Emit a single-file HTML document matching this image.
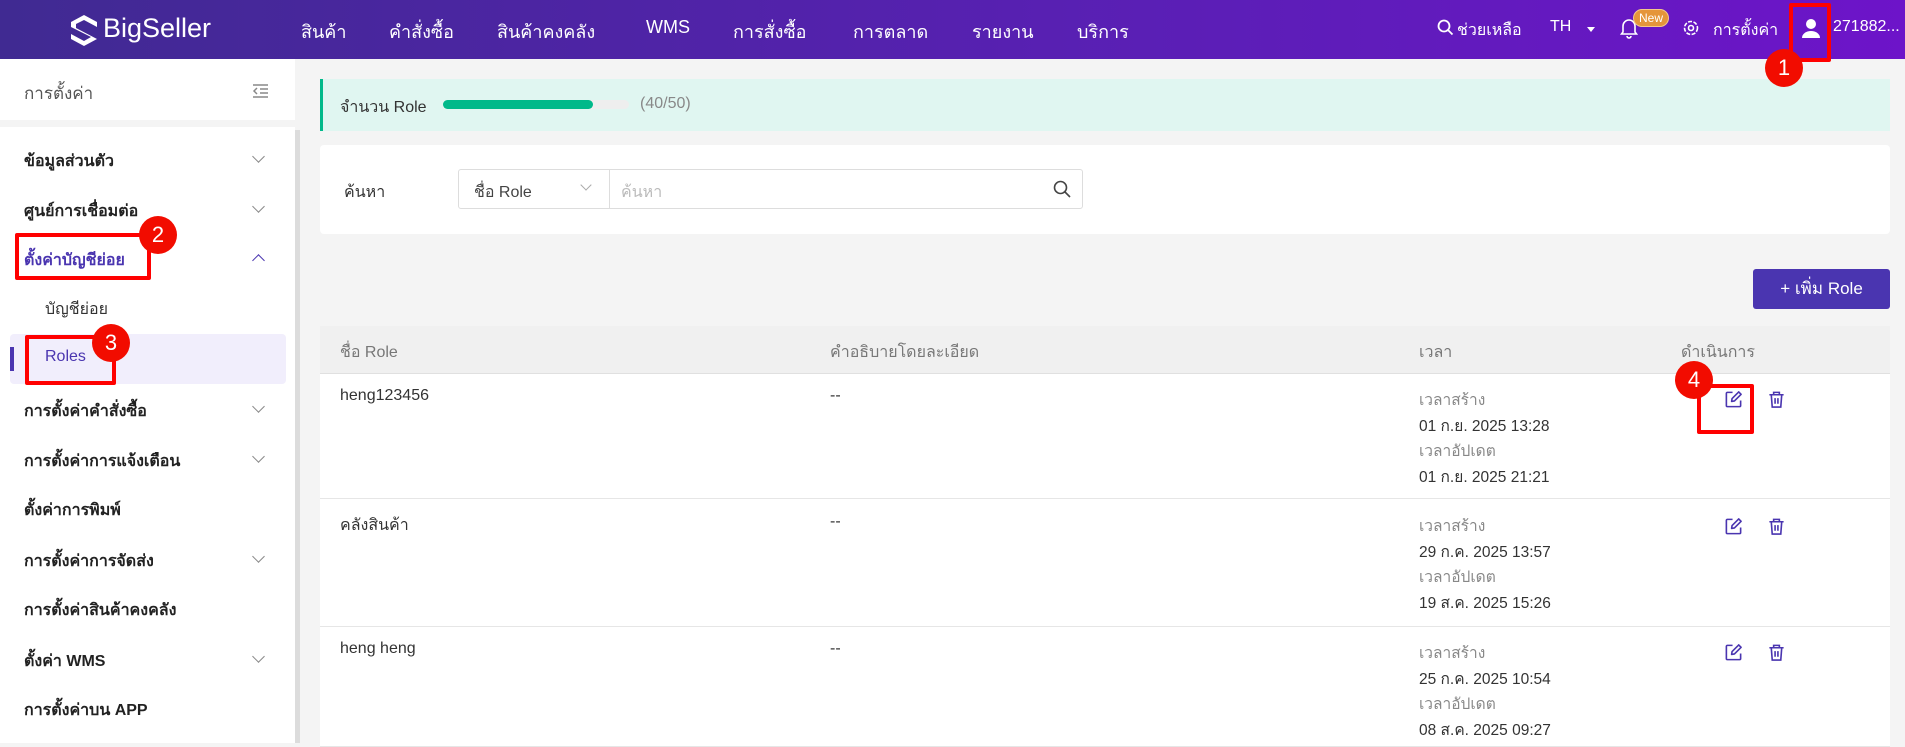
<!DOCTYPE html>
<html><head><meta charset="utf-8"><style>
*{box-sizing:border-box;margin:0;padding:0}
body{width:1905px;height:743px;overflow:hidden;background:#f4f4f4;font-family:"Liberation Sans","Noto Sans CJK SC",sans-serif;color:#333;position:relative}
.a{position:absolute;white-space:nowrap}
.hdr{position:absolute;left:0;top:0;width:1905px;height:59px;background:linear-gradient(90deg,#402a92,#5a1fb5 60%,#6d14c9)}
.nav{color:#fff;font-size:18px;top:17px}
.side{position:absolute;left:0;top:59px;width:295px;height:684px;background:#fff}
.mi{font-size:16px;font-weight:bold;color:#222;left:24px}
.chev{left:254px;width:9px;height:9px;border-right:1.5px solid #888;border-bottom:1.5px solid #888;transform:rotate(45deg)}
.red{position:absolute;border:4px solid #f00;border-radius:2px}
.circ{position:absolute;width:38px;height:38px;border-radius:50%;background:#f20c00;color:#fff;font-size:22px;text-align:center;line-height:38px}
.tl{font-size:15.5px;color:#888;left:1419px}
.tv{font-size:15.5px;color:#333;left:1419px}
.row{position:absolute;left:320px;width:1570px;background:#fff;border-bottom:1px solid #e6e6e6}
</style></head><body>
<div class="hdr"></div>
<svg class="a" style="left:68px;top:13px" width="32" height="34" viewBox="0 0 32 34"><path d="M16 2 L29 9 L29 14 L16 7 L8 11 L8 15 L29 26 L16 33 L3 26 L3 21 L16 28 L23 24 L3 14 L3 9 Z" fill="#fff"/></svg>
<div class="a" style="left:103px;top:13px;color:#fff;font-size:27px">BigSeller</div>
<div class="a nav" style="left:301px">สินค้า</div>
<div class="a nav" style="left:389px">คำสั่งซื้อ</div>
<div class="a nav" style="left:497px">สินค้าคงคลัง</div>
<div class="a nav" style="left:646px">WMS</div>
<div class="a nav" style="left:733px">การสั่งซื้อ</div>
<div class="a nav" style="left:853px">การตลาด</div>
<div class="a nav" style="left:972px">รายงาน</div>
<div class="a nav" style="left:1077px">บริการ</div>
<svg class="a" style="left:1437px;top:19px" width="17" height="17" viewBox="0 0 17 17"><circle cx="7" cy="7" r="5.5" stroke="#fff" stroke-width="1.8" fill="none"/><path d="M11 11 L15.5 15.5" stroke="#fff" stroke-width="1.8"/></svg>
<div class="a" style="left:1457px;top:18px;color:#fff;font-size:16px">ช่วยเหลือ</div>
<div class="a" style="left:1550px;top:18px;color:#fff;font-size:16px">TH</div>
<div class="a" style="left:1587px;top:27px;border-left:4px solid transparent;border-right:4px solid transparent;border-top:5px solid #fff"></div>
<svg class="a" style="left:1620px;top:17px" width="18" height="22" viewBox="0 0 18 22"><path d="M3 15 V9 a6 6 0 0 1 12 0 V15 L16.5 17 H1.5 Z M7 19 a2 2 0 0 0 4 0" stroke="#fff" stroke-width="1.6" fill="none"/></svg>
<div class="a" style="left:1633px;top:9px;background:#e5953a;color:#fff;font-size:12px;border-radius:9px;padding:1px 5px;border:1px solid #f5c88a">New</div>
<svg class="a" style="left:1682px;top:19px" width="18" height="18" viewBox="0 0 18 18"><circle cx="9" cy="9" r="6.5" stroke="#fff" stroke-width="1.6" fill="none" stroke-dasharray="4 1.5"/><circle cx="9" cy="9" r="2.5" stroke="#fff" stroke-width="1.6" fill="none"/></svg>
<div class="a" style="left:1713px;top:18px;color:#fff;font-size:16px">การตั้งค่า</div>
<svg class="a" style="left:1800px;top:17px" width="22" height="22" viewBox="0 0 22 22"><circle cx="11" cy="7" r="5" fill="#fff"/><path d="M2 21 a9 7 0 0 1 18 0 Z" fill="#fff"/></svg>
<div class="a" style="left:1833px;top:18px;color:#fff;font-size:16px">271882...</div>

<div class="side"></div>
<div class="a" style="left:0;top:120px;width:295px;height:7px;background:#f4f4f4"></div>
<div class="a" style="left:295px;top:130px;width:5px;height:613px;background:#dcdcdc"></div>
<div class="a" style="left:24px;top:80px;font-size:17px;color:#555">การตั้งค่า</div>
<svg class="a" style="left:252px;top:84px" width="17" height="14" viewBox="0 0 17 14"><path d="M1 1H16M8 5H16M8 9H16M1 13H16M5 4 L2 7 L5 10" stroke="#888" stroke-width="1.5" fill="none"/></svg>
<div class="a mi" style="top:149px">ข้อมูลส่วนตัว</div><div class="a chev" style="top:152px"></div>
<div class="a mi" style="top:199px">ศูนย์การเชื่อมต่อ</div><div class="a chev" style="top:202px"></div>
<div class="a mi" style="top:248px;color:#4a35b0">ตั้งค่าบัญชีย่อย</div><div class="a chev" style="top:256px;transform:rotate(225deg);border-color:#4a35b0"></div>
<div class="a" style="left:45px;top:297px;font-size:16px;color:#333">บัญชีย่อย</div>
<div class="a" style="left:10px;top:334px;width:276px;height:50px;background:#f1eefc;border-radius:4px"></div>
<div class="a" style="left:10px;top:347px;width:4px;height:24px;background:#4a35b0"></div>
<div class="a" style="left:45px;top:348px;font-size:16px;color:#4a35b0">Roles</div>
<div class="a mi" style="top:399px">การตั้งค่าคำสั่งซื้อ</div><div class="a chev" style="top:402px"></div>
<div class="a mi" style="top:449px">การตั้งค่าการแจ้งเตือน</div><div class="a chev" style="top:452px"></div>
<div class="a mi" style="top:498px">ตั้งค่าการพิมพ์</div>
<div class="a mi" style="top:549px">การตั้งค่าการจัดส่ง</div><div class="a chev" style="top:552px"></div>
<div class="a mi" style="top:598px">การตั้งค่าสินค้าคงคลัง</div>
<div class="a mi" style="top:649px">ตั้งค่า WMS</div><div class="a chev" style="top:652px"></div>
<div class="a mi" style="top:698px">การตั้งค่าบน APP</div>

<div class="a" style="left:320px;top:79px;width:1570px;height:52px;background:#e0f6f1;border-left:3px solid #00b98a"></div>
<div class="a" style="left:340px;top:95px;font-size:16px;color:#333">จำนวน Role</div>
<div class="a" style="left:443px;top:100px;width:186px;height:9px;background:#eee;border-radius:5px"></div>
<div class="a" style="left:443px;top:100px;width:150px;height:9px;background:#00b98a;border-radius:5px"></div>
<div class="a" style="left:640px;top:95px;font-size:16px;color:#888">(40/50)</div>

<div class="a" style="left:320px;top:145px;width:1570px;height:89px;background:#fff;border-radius:4px"></div>
<div class="a" style="left:344px;top:180px;font-size:16px">ค้นหา</div>
<div class="a" style="left:458px;top:169px;width:625px;height:40px;border:1px solid #ddd;border-radius:3px"></div>
<div class="a" style="left:609px;top:169px;width:1px;height:40px;background:#ddd"></div>
<div class="a" style="left:474px;top:180px;font-size:16px;color:#444">ชื่อ Role</div>
<div class="a" style="left:582px;top:181px;width:8px;height:8px;border-right:1px solid #aaa;border-bottom:1px solid #aaa;transform:rotate(45deg)"></div>
<div class="a" style="left:621px;top:180px;font-size:16px;color:#bbb">ค้นหา</div>
<svg class="a" style="left:1053px;top:180px" width="18" height="18" viewBox="0 0 18 18"><circle cx="7.5" cy="7.5" r="6" stroke="#444" stroke-width="1.6" fill="none"/><path d="M12 12 L17 17" stroke="#444" stroke-width="1.6"/></svg>

<div class="a" style="left:1753px;top:269px;width:137px;height:40px;background:#4a35b0;border-radius:3px;color:#fff;font-size:17px;text-align:center;line-height:40px">+ เพิ่ม Role</div>

<div class="a" style="left:320px;top:326px;width:1570px;height:48px;background:#f0f0f0;border-bottom:1px solid #e0e0e0"></div>
<div class="a" style="left:340px;top:340px;font-size:16px;color:#777">ชื่อ Role</div>
<div class="a" style="left:830px;top:340px;font-size:16px;color:#777">คำอธิบายโดยละเอียด</div>
<div class="a" style="left:1419px;top:340px;font-size:16px;color:#777">เวลา</div>
<div class="a" style="left:1681px;top:340px;font-size:16px;color:#777">ดำเนินการ</div>

<div class="row" style="top:374px;height:125px"></div>
<div class="row" style="top:499px;height:128px"></div>
<div class="row" style="top:627px;height:120px"></div>

<div class="a" style="left:340px;top:387px;font-size:16px">heng123456</div>
<div class="a" style="left:830px;top:387px;font-size:16px">--</div>
<div class="a tl" style="top:387px">เวลาสร้าง</div><div class="a tv" style="top:413px">01 ก.ย. 2025 13:28</div>
<div class="a tl" style="top:438px">เวลาอัปเดต</div><div class="a tv" style="top:464px">01 ก.ย. 2025 21:21</div>

<div class="a" style="left:340px;top:513px;font-size:16px">คลังสินค้า</div>
<div class="a" style="left:830px;top:513px;font-size:16px">--</div>
<div class="a tl" style="top:513px">เวลาสร้าง</div><div class="a tv" style="top:539px">29 ก.ค. 2025 13:57</div>
<div class="a tl" style="top:564px">เวลาอัปเดต</div><div class="a tv" style="top:590px">19 ส.ค. 2025 15:26</div>

<div class="a" style="left:340px;top:640px;font-size:16px">heng heng</div>
<div class="a" style="left:830px;top:640px;font-size:16px">--</div>
<div class="a tl" style="top:640px">เวลาสร้าง</div><div class="a tv" style="top:666px">25 ก.ค. 2025 10:54</div>
<div class="a tl" style="top:691px">เวลาอัปเดต</div><div class="a tv" style="top:717px">08 ส.ค. 2025 09:27</div>

<svg width="0" height="0" style="position:absolute"><defs>
<symbol id="ed" viewBox="0 0 20 20"><path d="M9 2.5H3.5a1 1 0 0 0-1 1V16.5a1 1 0 0 0 1 1H16.5a1 1 0 0 0 1-1V11" stroke="#4a35b0" stroke-width="1.7" fill="none"/><path d="M8 12 L8.5 9 L15.5 2 L18 4.5 L11 11.5 Z" stroke="#4a35b0" stroke-width="1.7" fill="none" stroke-linejoin="round"/></symbol>
<symbol id="tr" viewBox="0 0 20 20"><path d="M2.5 5H17.5M7 5V2.5H13V5M4.5 5L5.5 18H14.5L15.5 5M8.5 8.5V14.5M11.5 8.5V14.5" stroke="#4a35b0" stroke-width="1.7" fill="none"/></symbol></defs></svg>
<svg class="a" style="left:1724px;top:390px" width="19" height="19"><use href="#ed"/></svg>
<svg class="a" style="left:1767px;top:390px" width="19" height="19"><use href="#tr"/></svg>
<svg class="a" style="left:1724px;top:517px" width="19" height="19"><use href="#ed"/></svg>
<svg class="a" style="left:1767px;top:517px" width="19" height="19"><use href="#tr"/></svg>
<svg class="a" style="left:1724px;top:643px" width="19" height="19"><use href="#ed"/></svg>
<svg class="a" style="left:1767px;top:643px" width="19" height="19"><use href="#tr"/></svg>

<div class="red" style="left:1789px;top:3px;width:42px;height:59px"></div>
<div class="circ" style="left:1765px;top:49px">1</div>
<div class="red" style="left:15px;top:233px;width:136px;height:47px"></div>
<div class="circ" style="left:139px;top:216px">2</div>
<div class="red" style="left:25px;top:335px;width:91px;height:50px"></div>
<div class="circ" style="left:92px;top:324px">3</div>
<div class="red" style="left:1697px;top:384px;width:57px;height:50px"></div>
<div class="circ" style="left:1675px;top:361px">4</div>
</body></html>
